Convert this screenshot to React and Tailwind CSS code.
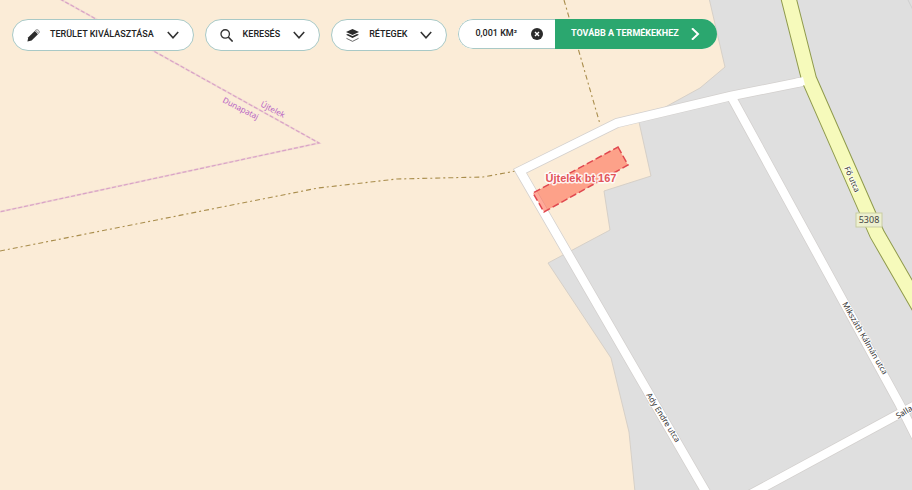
const roads = [
  'M740 500L897 415L916 405',
  'M732 98L900 405L918 441',
  'M707 494L520 171L617 123L731 96L806 81',
];

const mainRoad = 'M788 -4L809 79L877 234L930 326';

const streetLabels = [
  { text: 'Fő utca', x: 844, y: 168, angle: 66 },
  { text: 'Mikszáth Kálmán utca', x: 842, y: 304, angle: 60 },
  { text: 'Ady Endre utca', x: 646, y: 395, angle: 58 },
  { text: 'Salla', x: 898, y: 419, angle: -31 },
];

const borderLabels = [
  { text: 'Dunapataj', x: 222, y: 102, angle: 27 },
  { text: 'Újtelek', x: 260, y: 106, angle: 27 },
];

function Map() {
  return (
    <svg
      className="absolute inset-0 h-full w-full"
      viewBox="0 0 912 490"
      preserveAspectRatio="xMidYMid slice"
      role="img"
      aria-label="Térkép"
    >
      <rect width="912" height="490" fill="#fbecd7" />

      {/* residential area */}
      <path
        d="M709 -2L725 67L700 88L669 105L639 122L651 176L604 191L610 230L548 263L611 358L629 432L635 492H914V-2Z"
        fill="#dfdfdf"
        stroke="#d6d0c8"
        strokeWidth="1"
      />
      <path d="M907 -2L914 12" stroke="#cfcfcf" fill="none" />

      {/* municipal border */}
      <g fill="none" stroke="#d9a3c6">
        <path d="M60 -1L319 143L-1 212" strokeWidth="2" strokeOpacity="0.25" />
        <path d="M60 -1L319 143L-1 212" strokeWidth="1.2" strokeDasharray="4 2" />
      </g>

      {/* tracks */}
      <g fill="none" stroke="#a98d4c" strokeWidth="1.1" strokeDasharray="5 3 2 3">
        <path d="M0 251L318 188L397 179L483 177L516 171" />
        <path d="M564 0L600 124" />
      </g>

      <g fill="none" stroke="#d3d0ce" strokeWidth="10">
        {roads.map((d) => <path key={d} d={d} />)}
      </g>
      <g fill="none" stroke="#fff" strokeWidth="8.5">
        {roads.map((d) => <path key={d} d={d} />)}
      </g>
      <path d={mainRoad} fill="none" stroke="#8f9a4c" strokeWidth="16" />
      <path d={mainRoad} fill="none" stroke="#f6fabb" strokeWidth="14" />
      <path d="M796 83L804 81" stroke="#fff" strokeWidth="8" />

      <path
        d="M618 147L628 165L544 212L533 193Z"
        fill="#ff6f55"
        fillOpacity="0.6"
        stroke="#e0484f"
        strokeWidth="1.5"
        strokeDasharray="7 3"
      />

      <g className="font-['Noto_Sans',sans-serif] text-[8px]" fill="#333" stroke="#fff" strokeOpacity="0.7" strokeWidth="2" paintOrder="stroke">
        {streetLabels.map((l) => (
          <text key={l.text} transform={`translate(${l.x} ${l.y}) rotate(${l.angle})`}>{l.text}</text>
        ))}
      </g>
      <g className="font-['Noto_Sans',sans-serif] text-[8px]" fill="#b660c4">
        {borderLabels.map((l) => (
          <text key={l.text} transform={`translate(${l.x} ${l.y}) rotate(${l.angle})`}>{l.text}</text>
        ))}
      </g>

      <rect x="856" y="213" width="26" height="14" fill="#edf0cf" stroke="#c9cda4" />
      <text x="869" y="223" textAnchor="middle" fill="#444" className="font-['Noto_Sans',sans-serif] text-[9px]">5308</text>

      <text
        x="581"
        y="182"
        textAnchor="middle"
        fill="#e2555a"
        stroke="#fff"
        strokeOpacity="0.85"
        strokeWidth="3"
        strokeLinejoin="round"
        paintOrder="stroke"
        className="font-['Liberation_Sans',sans-serif] text-[11px] font-bold"
      >
        Újtelek bt 167
      </text>
    </svg>
  );
}

function Chevron() {
  return (
    <svg className="h-3 w-3" viewBox="0 0 12 12" fill="none" stroke="#333" strokeWidth="1.6" aria-hidden="true">
      <path d="M.8 3L6 8.7L11.2 3" />
    </svg>
  );
}

function PencilIcon() {
  return (
    <svg className="h-[13px] w-[13px]" viewBox="0 0 12 12" fill="#2b2b2b" aria-hidden="true">
      <path d="M.4 11.6L1.2 7.6L7.2 1.8L10.1 4.8L4.3 10.6Z" />
      <path d="M7.6 1.4L8.4 .8Q9.6 .2 10.6 1.2L11 1.6Q11.8 2.6 11.2 3.5L10.6 4.2Z" fill="#ddd" stroke="#666" strokeWidth=".6" />
    </svg>
  );
}

function SearchIcon() {
  return (
    <svg className="h-[13px] w-[13px]" viewBox="0 0 12 12" fill="none" stroke="#333" strokeWidth="1.2" aria-hidden="true">
      <circle cx="4.8" cy="4.6" r="3.9" />
      <path d="M7.6 7.4L11.7 11.6" strokeWidth="1.5" />
    </svg>
  );
}

function LayersIcon() {
  return (
    <svg className="h-[13px] w-[13px]" viewBox="0 0 12 12" fill="#2b2b2b" aria-hidden="true">
      <path d="M6 0L12 2.8L6 5.6L0 2.8Z" />
      <path d="M0 5.4L1.8 4.6L6 6.5L10.2 4.6L12 5.4L6 8.4Z" />
      <path d="M.4 8.6L6 11.4L11.6 8.6" fill="none" stroke="#555" strokeWidth=".8" />
    </svg>
  );
}

function MenuButton({ icon, label }) {
  return (
    <button type="button" className="flex h-8 items-center rounded-full border border-[#a9c9c6] bg-white px-3.5 whitespace-nowrap">
      {icon}
      <span className="mr-[13px] ml-2.5">{label}</span>
      <Chevron />
    </button>
  );
}

export default function App() {
  return (
    <div className="relative min-h-screen overflow-hidden bg-[#fbecd7]">
      <Map />
      <div className="relative flex flex-wrap items-start gap-[11px] px-3 pt-[19px] font-['Roboto',sans-serif] text-[9px] font-medium text-[#222]">
        <MenuButton icon={<PencilIcon />} label="TERÜLET KIVÁLASZTÁSA" />
        <MenuButton icon={<SearchIcon />} label="KERESÉS" />
        <MenuButton icon={<LayersIcon />} label="RÉTEGEK" />
        <div className="flex h-[30px] overflow-hidden rounded-full bg-white whitespace-nowrap">
          <div className="flex items-center gap-3.5 rounded-l-full border border-r-0 border-[#a9c9c6] pr-3 pl-4">
            <span>0,001 KM²</span>
            <button type="button" aria-label="Törlés">
              <svg className="h-3 w-3" viewBox="0 0 12 12" aria-hidden="true">
                <circle cx="6" cy="6" r="6" fill="#2b2b2b" />
                <path d="M4 4L8 8M8 4L4 8" stroke="#fff" strokeWidth="1.4" />
              </svg>
            </button>
          </div>
          <button type="button" className="flex items-center gap-2.5 bg-[#2ba76f] px-4 font-bold text-white">
            TOVÁBB A TERMÉKEKHEZ
            <svg className="h-3 w-3" viewBox="0 0 12 12" fill="none" stroke="#fff" strokeWidth="2" aria-hidden="true">
              <path d="M3 .3L9 6L3 11.7" />
            </svg>
          </button>
        </div>
      </div>
    </div>
  );
}
